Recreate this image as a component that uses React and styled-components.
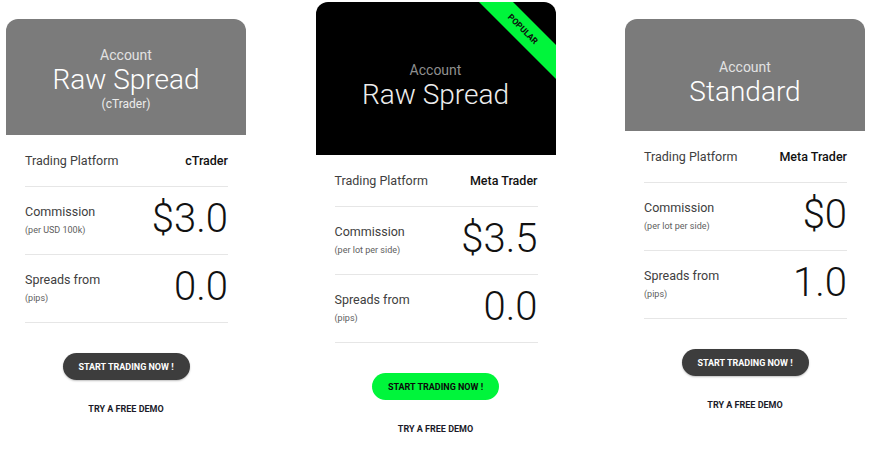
import React from "react";
import styled, { createGlobalStyle } from "styled-components";

const Global = createGlobalStyle`
  html, body { margin: 0; padding: 0; background: #ffffff; }
  body { font-family: Roboto, "Liberation Sans", Arial, sans-serif; }
  * { box-sizing: border-box; }
`;

const Page = styled.div`
  display: flex;
  align-items: flex-start;
  gap: 69.5px;
  padding-left: 6px;
  width: 880px;
  height: 468px;
  overflow: hidden;
`;

const Card = styled.div`
  width: 240px;
  flex: 0 0 240px;
  margin-top: ${(p) => p.$top}px;
  display: flex;
  flex-direction: column;
`;

const Header = styled.div`
  position: relative;
  overflow: hidden;
  border-radius: 12px 12px 0 0;
  background: ${(p) => (p.$dark ? "#000000" : "#7b7b7b")};
  padding: ${(p) => p.$pt}px 10px ${(p) => p.$pb}px;
  display: flex;
  flex-direction: column;
  align-items: center;
  text-align: center;
`;

const Kicker = styled.div`
  font-size: 14px;
  line-height: 18px;
  font-weight: 400;
  color: ${(p) => (p.$dark ? "#8f8f8f" : "#e2e2e2")};
`;

const Title = styled.div`
  font-size: 28px;
  line-height: 32px;
  font-weight: 300;
  color: ${(p) => (p.$dark ? "#ededed" : "#ffffff")};
`;

const SubTitle = styled.div`
  font-size: 12px;
  line-height: 16px;
  font-weight: 400;
  color: #ececec;
`;

const Ribbon = styled.div`
  position: absolute;
  left: 132px;
  top: 15px;
  width: 150px;
  height: 24px;
  background: #00f53b;
  transform: rotate(45deg);
  display: flex;
  align-items: center;
  justify-content: center;
  font-size: 8.5px;
  font-weight: 700;
  color: #0a0a0a;
`;

const Body = styled.div`
  padding: 0 18px 0 19px;
  display: flex;
  flex-direction: column;
`;

const PlatformRow = styled.div`
  display: flex;
  justify-content: space-between;
  align-items: center;
  padding: 18px 0 17px;
  line-height: 16px;
  border-bottom: 1px solid #e6e6e6;
`;

const StatRow = styled.div`
  display: flex;
  justify-content: space-between;
  align-items: flex-start;
  padding: 17px 0 14px;
  border-bottom: 1px solid #e6e6e6;
`;

const LabelBlock = styled.div`
  display: flex;
  flex-direction: column;
`;

const Label = styled.div`
  font-size: 12.5px;
  line-height: 16px;
  color: #404040;
`;

const Note = styled.div`
  font-size: 9px;
  line-height: 20px;
  color: #606060;
`;

const Platform = styled.div`
  font-size: 12.5px;
  font-weight: 500;
  color: #111111;
`;

const Value = styled.div`
  font-size: 40px;
  line-height: 36px;
  font-weight: 300;
  color: #111111;
  margin-top: -3px;
`;

const Actions = styled.div`
  display: flex;
  flex-direction: column;
  align-items: center;
  padding-top: 30px;
`;

const CTA = styled.button`
  width: 127px;
  height: 27px;
  border: none;
  border-radius: 14px;
  background: ${(p) => (p.$green ? "#00f53b" : "#3d3d3d")};
  color: ${(p) => (p.$green ? "#0a0a0a" : "#ffffff")};
  font-family: Roboto, "Liberation Sans", Arial, sans-serif;
  font-size: 9px;
  font-weight: 700;
  padding: 0;
  box-shadow: ${(p) => (p.$green ? "none" : "0 1px 2px rgba(0,0,0,0.25)")};
`;

const Demo = styled.div`
  margin-top: 23px;
  font-size: 9px;
  line-height: 12px;
  font-weight: 700;
  color: #1b1b2a;
`;

const plans = [
  {
    top: 19, pt: 27, pb: 23, dark: false, title: "Raw Spread", sub: "(cTrader)",
    platform: "cTrader", commission: "$3.0", commNote: "(per USD 100k)", spread: "0.0",
  },
  {
    top: 2, pt: 59, pb: 44, dark: true, title: "Raw Spread", popular: true,
    platform: "Meta Trader", commission: "$3.5", commNote: "(per lot per side)", spread: "0.0",
  },
  {
    top: 19, pt: 39, pb: 23, dark: false, title: "Standard",
    platform: "Meta Trader", commission: "$0", commNote: "(per lot per side)", spread: "1.0",
  },
];

export default function App() {
  return (
    <>
      <Global />
      <Page>
        {plans.map((p, i) => (
          <Card key={i} $top={p.top}>
            <Header $dark={p.dark} $pt={p.pt} $pb={p.pb}>
              <Kicker $dark={p.dark}>Account</Kicker>
              <Title $dark={p.dark}>{p.title}</Title>
              {p.sub && <SubTitle>{p.sub}</SubTitle>}
              {p.popular && <Ribbon>POPULAR</Ribbon>}
            </Header>
            <Body>
              <PlatformRow>
                <Label>Trading Platform</Label>
                <Platform>{p.platform}</Platform>
              </PlatformRow>
              <StatRow>
                <LabelBlock>
                  <Label>Commission</Label>
                  <Note>{p.commNote}</Note>
                </LabelBlock>
                <Value>{p.commission}</Value>
              </StatRow>
              <StatRow>
                <LabelBlock>
                  <Label>Spreads from</Label>
                  <Note>(pips)</Note>
                </LabelBlock>
                <Value>{p.spread}</Value>
              </StatRow>
            </Body>
            <Actions>
              <CTA $green={p.popular}>START TRADING NOW !</CTA>
              <Demo>TRY A FREE DEMO</Demo>
            </Actions>
          </Card>
        ))}
      </Page>
    </>
  );
}
